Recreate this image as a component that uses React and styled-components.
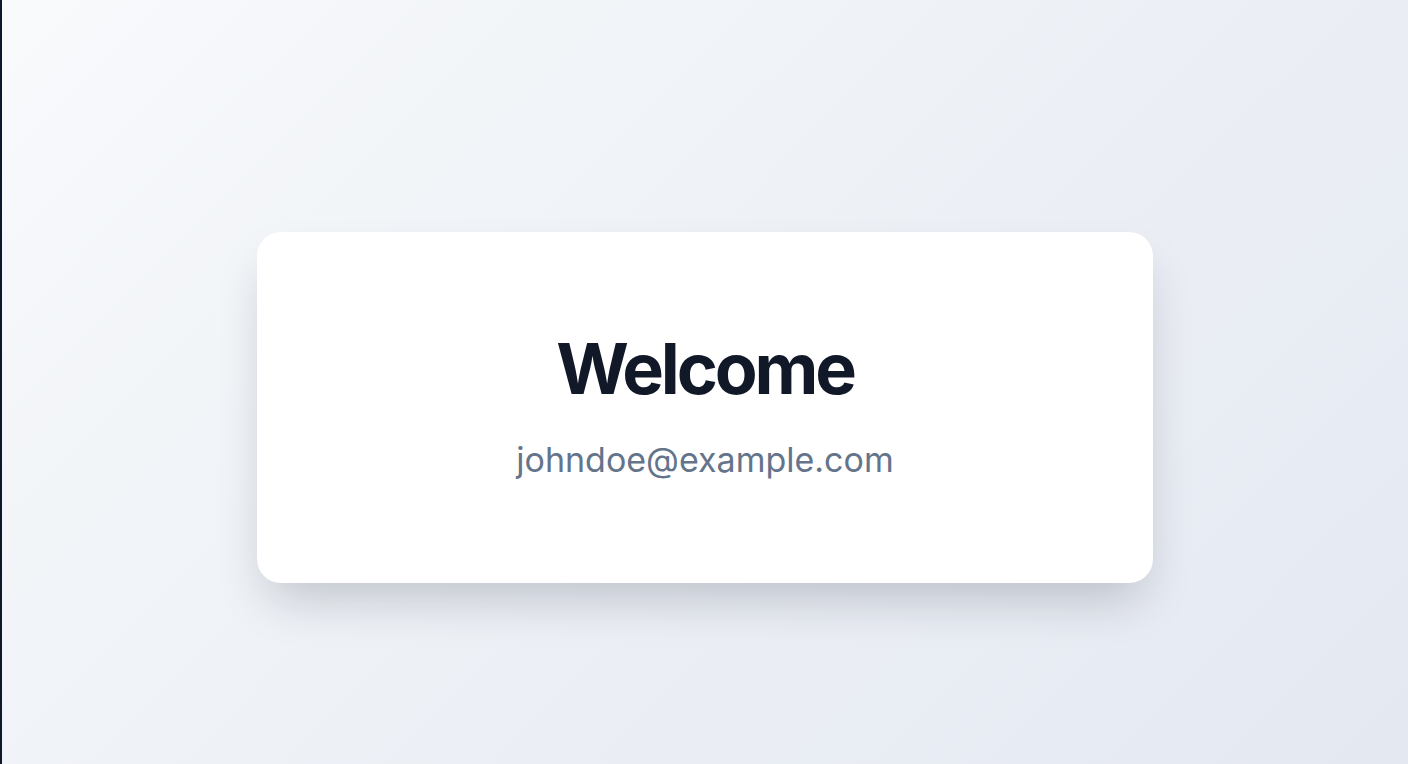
import React from "react";
import styled, { createGlobalStyle } from "styled-components";

const GlobalStyle = createGlobalStyle`
  html, body {
    margin: 0;
    padding: 0;
    height: 100%;
  }
  body {
    font-family: Inter, "Liberation Sans", sans-serif;
    -webkit-font-smoothing: antialiased;
  }
`;

const Page = styled.div`
  box-sizing: border-box;
  min-height: 100vh;
  padding-top: 232px;
  display: flex;
  justify-content: center;
  align-items: flex-start;
  border-left: 2px solid #0f172a;
  background: linear-gradient(135deg, #f8fafc 0%, #eef1f6 45%, #e4e8f1 100%);
`;

const Card = styled.div`
  box-sizing: border-box;
  width: 896px;
  padding: 102px 64px 103px;
  display: flex;
  flex-direction: column;
  align-items: center;
  gap: 36px;
  background: #ffffff;
  border-radius: 24px;
  box-shadow: 0 25px 50px -12px rgba(15, 23, 42, 0.22);
`;

const Title = styled.h1`
  margin: 0;
  font-size: 70px;
  line-height: 1;
  font-weight: 700;
  letter-spacing: -0.045em;
  color: #111827;
`;

const Email = styled.p`
  margin: 0;
  font-size: 34px;
  line-height: 40px;
  font-weight: 400;
  color: #64748b;
`;

export default function App() {
  return (
    <>
      <GlobalStyle />
      <Page>
        <Card>
          <Title>Welcome</Title>
          <Email>johndoe@example.com</Email>
        </Card>
      </Page>
    </>
  );
}
